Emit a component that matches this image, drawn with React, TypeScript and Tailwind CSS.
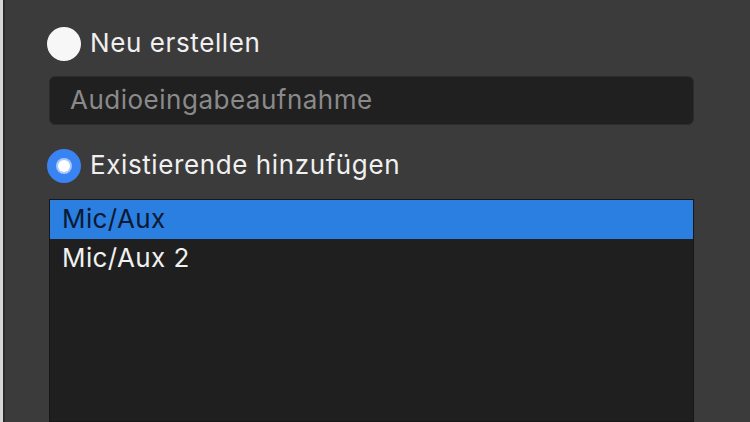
import React from "react";

export default function App() {
  const font = { fontFamily: "Inter, 'Liberation Sans', sans-serif" };
  return (
    <div
      className="w-[750px] h-[422px] bg-[#3c3b3c] flex overflow-hidden"
      style={font}
    >
      <div className="w-[3px] h-full bg-[#d6d6d6] shrink-0" />
      <div className="w-[2px] h-full bg-[#2a2a2a] shrink-0" />
      <div className="flex flex-col pl-[42px] pt-[27px] w-[700px]">
        <div className="flex items-center h-[34px]">
          <div className="w-[34px] h-[34px] rounded-full bg-[#f7f7f7] shrink-0" />
          <span className="ml-[9px] text-[26px] leading-none text-[#f0f0f0] tracking-[0.6px] -mt-[3px]">
            Neu erstellen
          </span>
        </div>
        <div className="ml-[2px] mt-[15px] w-[645px] h-[49px] rounded-[6px] bg-[#202020] border border-[#2c2c2c] flex items-center pl-[20px]">
          <span className="text-[26px] leading-none text-[#8a8a8a] tracking-[0.5px] -mt-[1px]">
            Audioeingabeaufnahme
          </span>
        </div>
        <div className="flex items-center h-[34px] mt-[24px]">
          <div className="w-[34px] h-[34px] rounded-full bg-[#3a83f2] shrink-0 flex items-center justify-center">
            <div className="w-[12px] h-[12px] rounded-full bg-white shadow-[0_0_0_2px_#a9c9f8]" />
          </div>
          <span className="ml-[9px] text-[26px] leading-none text-[#f0f0f0] tracking-[0.6px] -mt-[3px]">
            Existierende hinzufügen
          </span>
        </div>
        <div className="ml-[2px] mt-[16px] w-[645px] flex-1 bg-[#1f1f1f] border border-[#171717] flex flex-col">
          <div className="h-[39px] bg-[#2a7fe0] flex items-center pl-[12px]">
            <span className="text-[26px] leading-none text-[#0a1a33] tracking-[0.4px] -mt-[1px]">
              Mic/Aux
            </span>
          </div>
          <div className="h-[39px] flex items-center pl-[12px]">
            <span className="text-[26px] leading-none text-[#f0f0f0] tracking-[0.4px] -mt-[1px]">
              Mic/Aux 2
            </span>
          </div>
        </div>
      </div>
    </div>
  );
}
